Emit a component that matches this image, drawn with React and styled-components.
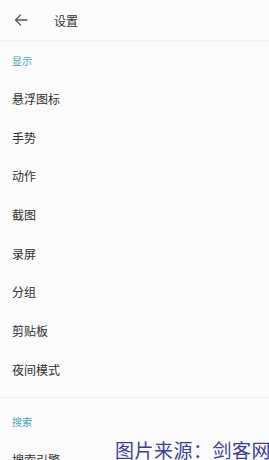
import styled, { createGlobalStyle } from "styled-components"

const GlobalStyle = createGlobalStyle`
  html, body {
    margin: 0;
    padding: 0;
    background: #fbfbfb;
  }
  body {
    font-family: "Noto Sans CJK SC", "Noto Sans", sans-serif;
  }
`

const sections = [
  {
    title: "显示",
    items: ["悬浮图标", "手势", "动作", "截图", "录屏", "分组", "剪贴板", "夜间模式"],
  },
  {
    title: "搜索",
    items: ["搜索引擎", "搜索建议"],
  },
]

function BackArrow() {
  return (
    <svg width="14" height="12" viewBox="0 0 14 12" fill="none">
      <path
        d="M13 6H1.5M6.5 1L1.5 6l5 5"
        stroke="#5a5a5a"
        strokeWidth="1.3"
        strokeLinecap="round"
        strokeLinejoin="round"
      />
    </svg>
  )
}

function App() {
  return (
    <Page>
      <GlobalStyle />
      <Header>
        <BackButton>
          <BackArrow />
        </BackButton>
        <Title>设置</Title>
      </Header>
      {sections.map((section, i) => (
        <Section key={section.title} $first={i === 0}>
          <SectionTitle $first={i === 0}>{section.title}</SectionTitle>
          {section.items.map((item) => (
            <Row key={item}>{item}</Row>
          ))}
        </Section>
      ))}
      <Watermark>图片来源：剑客网</Watermark>
    </Page>
  )
}

export default App

const Page = styled.div`
  position: relative;
  width: 269px;
  height: 460px;
  overflow: hidden;
  background: #fbfbfb;
`

const Header = styled.div`
  display: flex;
  align-items: center;
  height: 40px;
  border-bottom: 1px solid #f0f0f0;
  box-shadow: 0 1px 2px rgba(0, 0, 0, 0.03);
`

const BackButton = styled.div`
  display: flex;
  align-items: center;
  justify-content: center;
  width: 40px;
  height: 40px;
  margin-left: 1px;
`

const Title = styled.div`
  margin-left: 13px;
  font-size: 12px;
  color: #333;
`

const Section = styled.div`
  padding-bottom: 8px;
  border-top: ${(p) => (p.$first ? "none" : "1px solid #eeeeee")};
`

const SectionTitle = styled.div`
  display: flex;
  align-items: center;
  height: 38px;
  padding-top: ${(p) => (p.$first ? "0" : "5px")};
  padding-left: 12px;
  font-size: 10px;
  color: #3aa6b9;
`

const Row = styled.div`
  display: flex;
  align-items: center;
  height: 38.7px;
  padding-left: 12px;
  font-size: 12px;
  color: #2f2f2f;
`

const Watermark = styled.div`
  position: absolute;
  right: -2px;
  bottom: 1px;
  font-family: "Noto Sans CJK SC", serif;
  font-size: 19px;
  letter-spacing: 0.5px;
  color: #3b3ba0;
  line-height: 1;
`
